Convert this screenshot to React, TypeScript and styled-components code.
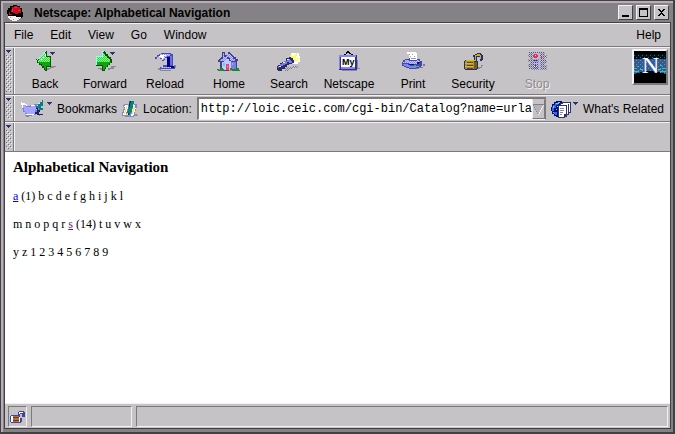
import React from 'react';
import styled, { createGlobalStyle } from 'styled-components';

const c = {
  face: '#c6c3c6',
  light: '#f2f0f2',
  shade: '#7b797b',
  dark: '#424142',
  title: '#848284',
  rim: '#b8acb8',
  navy: '#31316b',
};

const Global = createGlobalStyle`
  * { box-sizing: border-box; }
  body { margin: 0; background: ${c.dark}; }
  button, input { font: inherit; color: inherit; }
`;

const Outer = styled.div`
  min-height: 100vh;
  display: flex;
  border: solid ${c.dark};
  border-width: 1px 2px 2px 1px;
  font: 12px/14px 'Liberation Sans', Arial, sans-serif;
  color: #000;
`;

const Frame = styled.div`
  flex: 1;
  min-width: 0;
  display: flex;
  flex-direction: column;
  background: ${c.title};
  border: solid ${c.rim};
  border-width: 2px 0 0 2px;
  padding: 0 2px 3px 1px;
`;

const TitleBar = styled.header`
  height: 19px;
  display: flex;
  align-items: center;
  gap: 11px;
  padding: 0 2px 0 3px;
`;

const Title = styled.h1`
  flex: 1;
  margin: 0;
  font-size: 12px;
  line-height: 14px;
  font-weight: bold;
  white-space: nowrap;
`;

const WindowButtons = styled.div`
  display: flex;
  gap: 3px;
`;

const WindowButton = styled.button`
  width: 15px;
  height: 15px;
  padding: 0;
  display: grid;
  place-items: center;
  background: ${c.face};
  border: 1px solid;
  border-color: ${c.light} ${c.dark} ${c.dark} ${c.light};
`;

const Client = styled.div`
  flex: 1;
  display: flex;
  flex-direction: column;
  border: 1px solid ${c.dark};
  background: ${c.face};
`;

const MenuBar = styled.nav`
  height: 24px;
  display: flex;
  align-items: center;
  gap: 17px;
  padding: 0 9px;
  border: solid;
  border-width: 1px 0;
  border-color: ${c.light} ${c.face} ${c.shade};
`;

const MenuButton = styled.button<{ $end?: boolean }>`
  border: 0;
  padding: 0;
  background: none;
  margin-left: ${(p) => (p.$end ? 'auto' : '0')};
`;

const Bar = styled.div<{ $height: number }>`
  min-height: ${(p) => p.$height}px;
  display: flex;
  border-top: 1px solid ${c.light};
  border-bottom: 1px solid ${c.shade};
`;

const Grip = styled.button`
  width: 9px;
  flex: none;
  padding: 2px 1px;
  display: flex;
  flex-direction: column;
  gap: 2px;
  background: ${c.face};
  border: 0;
  border-right: 1px solid ${c.shade};
`;

const GripDots = styled.span`
  flex: 1;
  width: 6px;
  background-image: conic-gradient(at 1px 1px, transparent 75%, #6b6984 0),
    conic-gradient(at 1px 1px, transparent 75%, #6b6984 0),
    conic-gradient(at 1px 1px, transparent 75%, #f2f0f2 0),
    conic-gradient(at 1px 1px, transparent 75%, #f2f0f2 0);
  background-size: 4px 4px;
  background-position: 0 0, 2px 2px, 1px 1px, 3px 3px;
`;

const BarBody = styled.div`
  flex: 1;
  min-width: 0;
  display: flex;
  align-items: center;
  border-left: 1px solid ${c.light};
`;

const ToolGroup = styled.div`
  display: flex;
  align-self: stretch;
  margin-right: 4px;
`;

const Tool = styled.button`
  width: 60px;
  padding: 2px 0 0;
  display: flex;
  flex-direction: column;
  align-items: center;
  gap: 5px;
  border: 0;
  background: none;

  &:disabled {
    color: #8e8b8e;
    text-shadow: 1px 1px 0 ${c.light};
  }
`;

const Throbber = styled.a`
  margin: 0 2px 8px auto;
  height: 36px;
  border: 2px solid;
  border-color: ${c.light} ${c.shade} ${c.shade} ${c.light};
`;

const Quick = styled.button`
  flex: none;
  display: flex;
  align-items: center;
  gap: 5px;
  padding: 0;
  border: 0;
  background: none;
  white-space: nowrap;
`;

const LocationBody = styled(BarBody)`
  padding: 0 6px;
  gap: 5px;
`;

const LocationLabel = styled.label`
  display: flex;
  align-items: center;
  gap: 5px;
`;

const UrlBox = styled.div`
  flex: 1;
  min-width: 0;
  height: 23px;
  display: flex;
  border: solid;
  border-width: 2px 1px 1px 2px;
  border-color: ${c.shade} ${c.shade} ${c.light} ${c.shade};
`;

const Url = styled.input`
  flex: 1;
  min-width: 0;
  border: 0;
  border-radius: 0;
  padding: 0 0 0 2px;
  background: #fff;
  font: 12px/14px 'Liberation Mono', 'Courier New', monospace;
  outline: 0;
`;

const UrlDrop = styled.button`
  width: 13px;
  padding: 0;
  display: grid;
  place-items: center;
  border: 1px solid;
  border-color: ${c.face} ${c.shade} ${c.shade} ${c.light};
  background: ${c.face};
`;

const Page = styled.main`
  flex: 1;
  padding: 8px;
  background: #fff;
  font: 12px/14px 'Liberation Serif', 'Times New Roman', serif;

  p { margin: 14px 0 0; }
`;

const Heading = styled.h3`
  margin: 0;
  font-size: 15px;
  line-height: 15px;
`;

const Link = styled.a<{ $visited?: boolean }>`
  color: ${(p) => (p.$visited ? '#551a8b' : '#0000ee')};
`;

const StatusBar = styled.footer`
  height: 25px;
  display: flex;
  gap: 4px;
  padding: 2px 2px 1px 3px;
  border-top: 1px solid ${c.light};
`;

const Cell = styled.div<{ $width?: number }>`
  flex: ${(p) => (p.$width ? `0 0 ${p.$width}px` : '1')};
  border: 1px solid;
  border-color: ${c.shade} ${c.light} ${c.light} ${c.shade};
`;

const SecureButton = styled.button`
  width: 19px;
  padding: 0;
  display: grid;
  place-items: center;
  background: ${c.face};
  border: 1px solid;
  border-color: ${c.shade} ${c.light} ${c.light} ${c.shade};
`;

type SvgProps = { w?: number; h?: number; children: React.ReactNode };
const Art = ({ w = 24, h = 22, children }: SvgProps) => (
  <svg width={w} height={h} viewBox={`0 0 ${w} ${h}`} shapeRendering="crispEdges" aria-hidden="true">
    {children}
  </svg>
);

const Defs = styled.svg`
  display: block;
`;

const Patterns = () => (
  <Defs width="0" height="0" aria-hidden="true">
    <defs>
      <pattern id="green" width="2" height="2" patternUnits="userSpaceOnUse">
        <path fill="#21e321" d="M0 0h2v2H0z" /><path fill="#9cf79c" d="M0 0h1v1H0zM1 1h1v1H1z" />
      </pattern>
      <pattern id="blue" width="2" height="2" patternUnits="userSpaceOnUse">
        <path fill="#8c8ef7" d="M0 0h2v2H0z" /><path fill="#c6c7ff" d="M0 0h1v1H0zM1 1h1v1H1z" />
      </pattern>
      <pattern id="grey" width="2" height="2" patternUnits="userSpaceOnUse">
        <path fill="#7b798c" d="M0 0h1v1H0z" /><path fill="#8c8a9c" d="M1 1h1v1H1z" />
      </pattern>
      <pattern id="stipple" width="2" height="2" patternUnits="userSpaceOnUse">
        <path fill="#52518c" d="M0 0h1v1H0z" /><path fill="#8c8a9c" d="M1 1h1v1H1z" />
      </pattern>
      <pattern id="sky" width="4" height="4" patternUnits="userSpaceOnUse">
        <path fill="#29618c" d="M0 0h4v4H0z" /><path fill="#4a4994" d="M0 0h2v1H0zM2 2h2v1H2z" /><path fill="#42a6ad" d="M2 1h1v1H2zM0 3h1v1H0z" />
      </pattern>
      <pattern id="night" width="4" height="4" patternUnits="userSpaceOnUse">
        <path fill="#001018" d="M0 0h4v4H0z" /><path fill="#186d73" d="M0 0h1v1H0zM2 2h1v1H2z" />
      </pattern>
    </defs>
  </Defs>
);

const Arrow = () => <Art w={5} h={3}><path fill={c.navy} d="M0 0h5v1H4v1H3v1H2V2H1V1H0z" /></Art>;

const BackIcon = () => (
  <Art>
    <path fill="#8c8a8c" d="M13 18h4v-2h6v1h-2v1h-3v1h-2v1h-3z" />
    <path fill="#085108" d="M12 1h2v5h4v11h-4v4h-2v-1h-1v-2H9v-2H8v-1H6v-2H4v-2H3v-2h1V9h2V7h2V5h2V3h1V2h1z" />
    <path fill="url(#green)" d="M12 3h1v4h4v5H5v-2h1V9h1V7h2V5h2V4h1z" />
    <path fill="#10a210" d="M5 12h12v4h-4v4h-1v-2h-1v-2H9v-2H7v-1H5z" />
    <path fill="#84ffff" d="M12 1h1v1h-1v2h-1v1h-1v1H9v1H7v2H5v1H4v1H3v-1h1V9h2V7h2V5h2V3h1V2h1z" />
    <path fill="#fff" d="M12 4h1v3h-1zM10 7h1v1h-1zM8 9h1v1H8z" />
    <path fill={c.navy} d="M17 2h5v1h-1v1h-1v1h-1V4h-1V3h-1z" />
  </Art>
);

const ForwardIcon = () => (
  <Art>
    <path fill="#8c8a8c" d="M5 18h5v2H7v-1H5zM15 18h3v-2h5v1h-2v2h-4v1h-2z" />
    <path fill="#085108" d="M9 1h3v1h1v2h2v2h1v1h2v2h1v4h-2v2h-2v2h-2v2h-1v2H9v-5H3V6h6z" />
    <path fill="url(#green)" d="M10 3h1v1h1v2h2v2h2v1h1v3H4V7h6z" />
    <path fill="#10a210" d="M4 12h14v1h-2v2h-2v2h-2v2h-1v1h-1v-5H4z" />
    <path fill="#84ffff" d="M9 1h2v1h-1v5H4v8H3V6h6z" />
    <path fill={c.navy} d="M17 2h5v1h-1v1h-1v1h-1V4h-1V3h-1z" />
  </Art>
);

const ReloadIcon = () => (
  <Art>
    <path fill="#8c8a9c" d="M5 18h3v2h10v1H7v-1H5zM21 15h2v3h-2z" />
    <path fill="#4a4db5" d="M6 4h2V3h10v1h2v12h2v3H7v-2h3v-2h4V8h-2v2h-1v1H9V9H7V7H4v2H2V7h2V5h2z" />
    <path fill="url(#blue)" d="M5 6h2V4h10v2h-3v1h-2v2h-1v1H9V8H7V7H5zM8 17h12v1H8z" />
    <path fill="#000084" d="M14 7h3v9h4v2h-3v-1h-4z" />
    <path fill="#6b71e7" d="M17 6h2v9h-2z" />
    <path fill="#fff" d="M5 6h1v1h2v1h1v1h1V8h1V6h2V5H7v1z" />
  </Art>
);

const HomeIcon = () => (
  <Art>
    <path fill="#42428c" d="M5 2h3v3h3V2h2v1h1v1h1v1h1v1h1v1h2v2h2v2h-1v10H3V12H1v-2h1V9h1V8h1V7h1z" />
    <path fill="url(#blue)" d="M6 3h1v4h2V6h1V5h1V4h2v1h1v1h1v1h1v2h2v2h-4v-1h-1V8h-1V7h-2v2H9v2H3v-1h1V9h2z" />
    <path fill="#c6c7ff" d="M5 12h2v-1h2V9h3v2h2v9H5z" />
    <path fill="#7b7de7" d="M14 12h5v7h-5z" />
    <path fill="#ef4173" d="M9 14h3v6H9z" />
    <path fill="#31e7e7" d="M6 13h2v3H6zM15 13h1v2h-1z" />
    <path fill="#efd700" d="M10 16h1v1h-1z" />
    <path fill="#108e31" d="M0 19h4v-1h2v1h1v2H1v-1H0zM13 18h2v1h5v-1h2v2h1v1H13z" />
    <path fill="#ef7d39" d="M2 19h1v1H2zM12 20h3v1h-3z" />
  </Art>
);

const SearchIcon = () => (
  <Art>
    <path fill="url(#grey)" d="M8 17h7v-1h6v2h-5v1h-4v2H8z" />
    <path fill="#fff" d="M14 3h8v3h1v6h-2v2h-5v-3h-2z" />
    <path fill="#ffff42" d="M14 5h1v1h1v1h1v2h-3V7h-1V5zM19 3h1v3h-1v2h-2V6h1V4h1zM17 9h2v1h2v1h-4v2h-2v-3h2zM20 8h3v1h-3z" />
    <path fill="#29296b" d="M9 8h3V7h2v1h2v2h1v3h-2v1h-3v1h-2v2H8v2H5v2H1v-1H0v-4h1v-1h2v-2h2v-1h2v-1h2z" />
    <path fill="#7b7de7" d="M10 9h3v1h1v1h1v2h-3v-1h-2v2H8v1H6v1H4v1H2v1H1v-2h2v-2h2v-1h2v-2h3z" />
    <path fill="#e7e7ff" d="M10 9h2v1h-2zM6 12h2v1H6zM2 16h2v1H2z" />
  </Art>
);

const MyIcon = () => (
  <Art>
    <path fill="#8c8a9c" d="M20 10h1v8h2v1h-3zM5 20h15v1H5z" />
    <path fill="#000" d="M9 2h1V1h2v1h1v1h1v1h2v1h-2V4h-2V3h-2v1H9v1H7V4h2z" />
    <path fill="#31318c" d="M2 5h18v15H2z" />
    <path fill="#8486f7" d="M2 5h17v2H3v12H2zM4 17h14v2H4z" />
    <path fill="#fff" d="M4 7h14v10H4z" />
    <text x="5" y="15" fontSize="9" fontWeight="bold" fontFamily="'Liberation Sans', sans-serif" fill="#000">My</text>
  </Art>
);

const PrintIcon = () => (
  <Art>
    <path fill="#7b798c" d="M9 18h9v-1h4v-3h2v2h-2v2h-4v1H9z" />
    <path fill="#fff" d="M6 2h9v1h1v7H8V4H6z" />
    <path fill="#9c9aad" d="M8 4h1v1H8zM11 4h1v1h-1zM9 6h1v1H9zM13 6h1v1h-1zM10 8h5v1h-5z" />
    <path fill="#4249a5" d="M4 9h4V8h1v2h7V9h3v2h2v5h-1v1h-2v1h-3v1H8v-1H5v-1H3v-1H1v-4h1v-2h2z" />
    <path fill="url(#blue)" d="M4 10h4v1h8v-1h2v1h1v1h-3v2H8v-1H2v-1h2z" />
    <path fill="#7b86ef" d="M2 14h5v1h2v1h9v1h-3v1H8v-1H5v-1H3v-1H2z" />
    <path fill="#18186b" d="M16 12h3v1h-1v1h-2zM8 14h5v1H8z" />
    <path fill="#00d742" d="M13 15h2v1h-2z" />
  </Art>
);

const LockIcon = () => (
  <Art>
    <path fill="#8c8a9c" d="M17 17h3v-2h2v1h-1v2h-2v1h-2z" />
    <path fill="#29297b" d="M13 5h1V4h2V3h4v1h1v1h1v5h-1v1h-2V7h-3v5h-3V7h-1V5z" />
    <path fill="#bdba00" d="M14 5h2V4h3v1h1v4h-1V6h-4v5h-1z" />
    <path fill="#29297b" d="M4 10h12v1h1v8h-1v1H4v-1H3v-8h1z" />
    <path fill="#9c9a21" d="M4 11h9v8H4z" />
    <path fill="#c6c321" d="M5 10h10v1H5zM4 13h8v1H4zM4 16h8v1H4z" />
    <path fill="#942142" d="M6 12h6v1H6zM6 15h6v1H6zM6 18h6v1H6z" />
    <path fill="#6b6500" d="M13 12h3v7h-3z" />
  </Art>
);

const StopIcon = () => (
  <Art>
    <path fill="url(#stipple)" d="M4 2h16v3h2v3h-2v2h2v3h-2v2h2v5H6v-1H4v-2H3v-3h2v-2H3V9h2V7H3V4h1z" />
    <path fill="#b5b6ef" d="M8 3h7v16H8z" />
    <path fill="#ef3131" d="M9 4h3v1h1v2h-1v1H9V7H8V5h1zM16 7h1v1h-1zM15 5h1v1h-1z" />
    <path fill="#f2f0f2" d="M10 5h1v1h-1zM9 11h1v1H9zM11 11h1v1h-1zM9 16h1v1H9zM11 16h1v1h-1z" />
    <path fill="url(#stipple)" d="M8 9h6v4H8zM8 14h6v5H8z" />
    <path fill="#42415a" d="M9 10h1v1H9zM11 10h1v1h-1zM10 12h1v1h-1zM9 17h1v1H9zM11 17h1v1h-1zM10 15h1v1h-1z" />
  </Art>
);

const BookmarksIcon = () => (
  <Art w={24} h={18}>
    <path fill="#8c8a9c" d="M4 15h4v1h10v-2h3v1h-2v1H8v1H5v-1H4z" />
    <path fill="#7b7de7" d="M0 2h1v1h3v1h2v2h3V5h4V4h4v3h1v5h-1v2h-2v1h-4v1H5v-2H4v-2H2V9H1V5H0z" />
    <path fill="#a5a6ff" d="M2 5h3v2h5V6h4v1h3v3h-3v4H6v-1H4v-2H3V8H2z" />
    <path fill="#fff" d="M0 2h1v1h3v1h2v2H5V5H2v3H1V5H0zM10 5h4v1h-4zM5 14h8v1H5z" />
    <path fill="#21215a" d="M17 6h2v2h-2v2h2v2h-1v2h4v1h-6v-1h-2v-2h2V9h-1V7h2z" />
    <path fill="#087d7b" d="M21 0h1v6h-2v2h2v2h-4V8h-3V6h2V4h2V2h2z" />
    <path fill="#a5ffff" d="M20 1h1v1h-2v2h-2v2h-1V5h1V3h2V2h1z" />
  </Art>
);

const LocationIcon = () => (
  <Art w={16} h={17}>
    <path fill="#8c8a9c" d="M11 14h4v1h1v1h-5z" />
    <path fill="#8486d6" d="M2 4h5v2h5V4h3v4h-1v3h-1v4h-1v2H3v-1H0v-4h1V9h1V7H1V5h1z" />
    <path fill="#fff" d="M3 5h3v4H5v3H4v3H1v-2h1v-3h1V7H2V6h1zM11 5h2v3h1v1h-1v3h-1v3h-1v1H9v-2h1z" />
    <path fill="#f7ef31" d="M4 6h1v3H4v3H3v2H2v-2h1V9h1zM12 6h1v3h-1v3h-1v2h-1v-3h1V8h1zM5 13h3v2H4v-1h1z" />
    <path fill="#08827b" d="M7 1h5v3h-1v4h-1v4H9v1H8v2H6v-2H5v-2h1V7h1z" />
    <path fill="#003942" d="M8 1h1v2H8v4H7V3h1zM6 13h1v2H6z" />
  </Art>
);

const RelatedIcon = () => (
  <Art w={20} h={18}>
    <path fill="#08087b" d="M5 1h6v1h2v14h-2v1H5v-1H3v-2H1v-3H0V7h1V4h2V2h2z" />
    <path fill="#2971e7" d="M2 5h2V3h3v2H5v3H3v3H1V7h1zM3 12h3v3H4z" />
    <path fill="#5ad7e7" d="M5 3h3v1H5zM2 6h1v2H2zM6 6h1v1H6zM2 12h1v1H2zM5 9h1v1H5zM7 2h2v1H7z" />
    <path fill="#31316b" d="M11 2h9v11h-2v2h-2v2h-2v1H7V5h2V3h2z" />
    <path fill="#fff" d="M12 3h7v9h-1V4h-6zM10 4h7v10h-1V5h-6zM8 6h7v8h-2v3H8z" />
    <path fill="#8486a5" d="M9 8h4v1H9zM9 10h4v1H9zM9 12h3v1H9zM9 14h2v1H9z" />
  </Art>
);

const HatIcon = () => (
  <Art w={16} h={17}>
    <path fill="#000" d="M3 2h3V1h4v1h3v2h2v4h1v5h-1v1H2v-2H1v-2H0V6h1V4h2z" />
    <path fill="#f2f0f2" d="M1 12h13v2h-1v1h-1v1h-2v1H5v-1H3v-1H2v-1H1z" />
    <path fill="#000" d="M3 9h4v1h3v1h4v2H9v-1H5v-1H3z" />
    <path fill="#c61021" d="M7 2h3v1h3v2h1v4h-3v1H8V9H6V8H4V6h1V3h2zM2 8h1v2h2v1H2z" />
    <path fill="#ef3142" d="M5 5h1v3H5zM8 3h2v1H8zM11 6h2v1h-2z" />
    <path fill="#a5aaa5" d="M3 13h1v1H3zM11 14h1v1h-1zM6 15h1v1H6z" />
  </Art>
);

const SmallLock = () => (
  <Art w={15} h={13}>
    <path fill="#42459c" d="M8 2h1V1h5v1h1v5h-3V4h-2v4h2v4h-1v1H1v-1H0V6h1V5h7z" />
    <path fill="#fff" d="M9 2h4v1h-3v1H9zM1 6h2v6H1z" />
    <path fill="#8c8a21" d="M3 6h6v6H3z" />
    <path fill="#c60063" d="M3 7h6v1H3zM3 10h6v1H3z" />
    <path fill="#fff" d="M9 7h1v5H9z" />
  </Art>
);

const NetscapeLogo = () => (
  <Art w={32} h={32}>
    <path d="M0 0h32v32H0z" />
    <path fill="url(#night)" d="M0 3h32v5H0z" />
    <path fill="url(#sky)" d="M0 8h32v15H0z" />
    <path fill="#4ab6bd" d="M0 17h2v1H0zM3 15h2v1H3zM0 20h5v1H0zM6 18h3v1H6zM26 14h2v1h-2zM28 17h4v1h-4zM24 18h3v1h-3zM26 20h6v1h-6z" />
    <path d="M0 23h2v-1h4v-1h5v-1h10v1h5v1h4v1h2v9H0z" />
    <text x="7" y="22" fontSize="24" fontFamily="'Liberation Serif', serif" fill="#5251c6">N</text>
    <text x="8" y="22" fontSize="24" fontFamily="'Liberation Serif', serif" fill="#fff">N</text>
  </Art>
);

const toolGroups = [
  [
    { label: 'Back', Icon: BackIcon },
    { label: 'Forward', Icon: ForwardIcon },
    { label: 'Reload', Icon: ReloadIcon },
  ],
  [
    { label: 'Home', Icon: HomeIcon },
    { label: 'Search', Icon: SearchIcon },
    { label: 'Netscape', Icon: MyIcon },
  ],
  [
    { label: 'Print', Icon: PrintIcon },
    { label: 'Security', Icon: LockIcon },
  ],
  [{ label: 'Stop', Icon: StopIcon, disabled: true }],
];

const QuickIcon = styled.span`
  display: flex;
  align-items: flex-start;
  gap: 2px;

  svg + svg { margin-top: 2px; }
`;

const Collapse = ({ label }: { label: string }) => (
  <Grip aria-label={label}>
    <Arrow />
    <GripDots />
  </Grip>
);

export default function App() {
  return (
    <>
      <Global />
      <Outer>
        <Frame>
          <Patterns />
          <TitleBar>
            <HatIcon />
            <Title>Netscape: Alphabetical Navigation</Title>
            <WindowButtons>
              <WindowButton aria-label="Minimize">
                <Art w={9} h={9}><path d="M1 7h7v2H1z" /></Art>
              </WindowButton>
              <WindowButton aria-label="Maximize">
                <Art w={9} h={9}><path fillRule="evenodd" d="M0 0h9v9H0zM1 2v6h7V2z" /></Art>
              </WindowButton>
              <WindowButton aria-label="Close">
                <Art w={9} h={9}>
                  <path d="M1 1h2v1h1v1h1V2h1V1h2v1H7v1H6v1H5v1h1v1h1v1h1v1H6V7H5V6H4v1H3v1H1V7h1V6h1V5h1V4H3V3H2V2H1z" />
                </Art>
              </WindowButton>
            </WindowButtons>
          </TitleBar>
          <Client>
            <MenuBar>
              {['File', 'Edit', 'View', 'Go', 'Window'].map((m) => <MenuButton key={m}>{m}</MenuButton>)}
              <MenuButton $end>Help</MenuButton>
            </MenuBar>
            <Bar $height={48}>
              <Collapse label="Collapse navigation toolbar" />
              <BarBody>
                {toolGroups.map((group) => (
                  <ToolGroup key={group[0].label}>
                    {group.map(({ label, Icon, ...rest }) => (
                      <Tool key={label} {...rest}><Icon />{label}</Tool>
                    ))}
                  </ToolGroup>
                ))}
                <Throbber href="#" aria-label="Netscape home page"><NetscapeLogo /></Throbber>
              </BarBody>
            </Bar>
            <Bar $height={27}>
              <Collapse label="Collapse location toolbar" />
              <LocationBody>
                <Quick><QuickIcon><BookmarksIcon /><Arrow /></QuickIcon>Bookmarks</Quick>
                <LocationLabel htmlFor="url"><LocationIcon />Location:</LocationLabel>
                <UrlBox>
                  <Url id="url" defaultValue="http://loic.ceic.com/cgi-bin/Catalog?name=urla" />
                  <UrlDrop aria-label="Recent locations">
                    <Art w={11} h={11}>
                      <path fill="#b5b2b5" d="M1 1h9v2H9v2H8v2H7v2H6v1H5V9H4V7H3V5H2V3H1z" />
                      <path fill="#848284" d="M0 0h11v1H1v2h1v2h1v2h1v2h1v1H4V8H3V6H2V4H1V2H0z" />
                      <path fill="#f2f0f2" d="M10 1h1v1h-1v2H9v2H8v2H7v2H6v1H5v-1h1V8h1V6h1V4h1V2h1z" />
                    </Art>
                  </UrlDrop>
                </UrlBox>
                <Quick><QuickIcon><RelatedIcon /><Arrow /></QuickIcon>What's Related</Quick>
              </LocationBody>
            </Bar>
            <Bar $height={30}>
              <Collapse label="Collapse personal toolbar" />
              <BarBody />
            </Bar>
            <Page>
              <Heading>Alphabetical Navigation</Heading>
              <p><Link href="#a">a</Link> (1) b c d e f g h i j k l</p>
              <p>m n o p q r <Link href="#s" $visited>s</Link> (14) t u v w x</p>
              <p>y z 1 2 3 4 5 6 7 8 9</p>
            </Page>
            <StatusBar>
              <SecureButton aria-label="Security information"><SmallLock /></SecureButton>
              <Cell $width={101} />
              <Cell />
            </StatusBar>
          </Client>
        </Frame>
      </Outer>
    </>
  );
}
